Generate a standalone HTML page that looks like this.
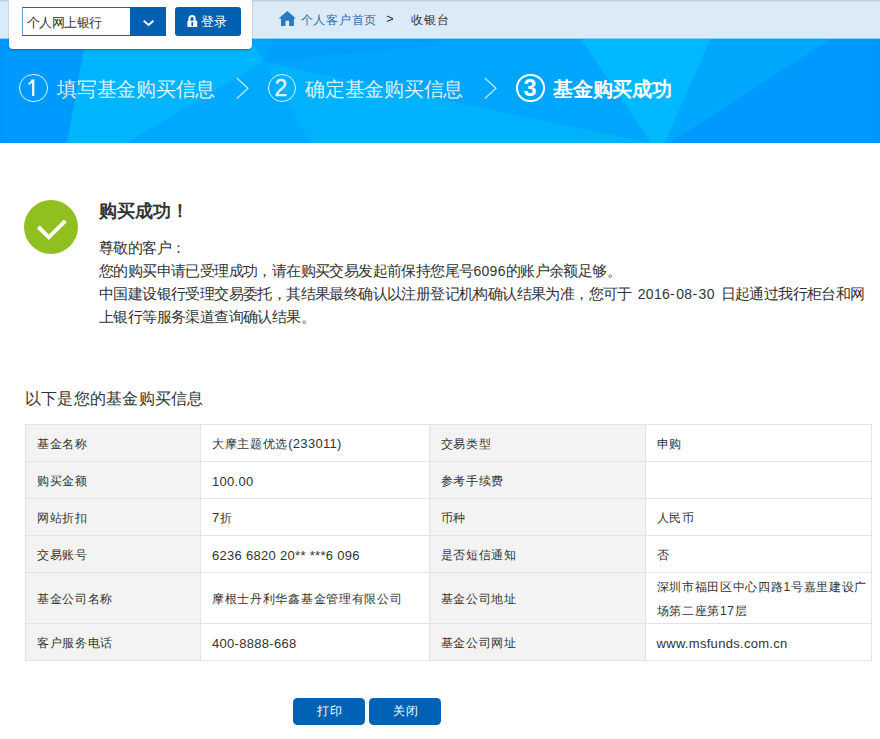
<!DOCTYPE html>
<html><head><meta charset="utf-8">
<style>
*{margin:0;padding:0;box-sizing:border-box}
html,body{width:880px;height:739px;overflow:hidden;background:#fff;font-family:"Liberation Sans",sans-serif;color:#333}
.abs{position:absolute}
#topbar{position:absolute;left:0;top:0;width:880px;height:38px;background:linear-gradient(#c3d1dd 0,#c3d1dd 1px,#d3e1ec 1px,#d3e1ec 2px,#dbeaf7 2px);border-bottom:1px solid #e5edf6}
#popup{position:absolute;z-index:5;left:9px;top:0;width:243px;height:48.5px;background:#fff;border-radius:0 0 4px 4px;box-shadow:0 1px 2px rgba(0,0,0,.3)}
#sel{position:absolute;left:12.5px;top:7px;width:144.5px;height:29px;border:1px solid #1863b0;border-left-color:#6b9bd2;background:#fff}
#sel span{position:absolute;left:4px;top:7px;font-size:13px;letter-spacing:-0.5px;color:#333;line-height:16px}
#dd{position:absolute;left:121px;top:7px;width:36px;height:29px;background:#0061b2}
#login{position:absolute;left:166px;top:7px;width:65.5px;height:29px;background:#0061b2;border-radius:3px;color:#fff;font-size:14px}
#crumb{position:absolute;top:11px;left:278px;font-size:13px;line-height:16px;white-space:nowrap}
#banner{position:absolute;left:0;top:38px;width:880px;height:105px;background:#05a8f6;overflow:hidden}
.step{position:absolute;top:75px;height:28px;color:rgba(255,255,255,.85);font-size:20px;letter-spacing:-0.25px;line-height:28px;white-space:nowrap}
.circ{position:absolute;top:73.8px;width:28.6px;height:28.6px;border:1.5px solid rgba(255,255,255,.85);border-radius:50%;color:rgba(255,255,255,.9);font-size:23px;line-height:27.4px;text-align:center}
#ok{position:absolute;left:24px;top:200px;width:54px;height:54px;border-radius:50%;background:#90c020}
#title{position:absolute;left:99px;top:200px;font-size:18px;font-weight:bold;line-height:22px;color:#333}
#msg{position:absolute;left:99px;top:236px;width:780px;font-size:15px;letter-spacing:-0.6px;line-height:23px;color:#333;white-space:nowrap}
.cm{letter-spacing:-0.6px}
.hy{letter-spacing:1.5px}
.sp{letter-spacing:1.7px}
#msg>div{height:23px}
.dg{font-size:14px;letter-spacing:0.3px}
#h2{position:absolute;left:25px;top:388px;font-size:16px;letter-spacing:0.23px;line-height:22px;color:#333}
table{position:absolute;left:25px;top:424px;width:846px;table-layout:fixed;border-collapse:collapse;font-size:13px;color:#333}
td{border:1px solid #e3e3e3;height:37px;padding:2px 11px 0 11px;vertical-align:middle;font-size:12px;letter-spacing:0.7px}
.n{font-size:13px;letter-spacing:0.3px}
td.l{background:#f3f3f3}
.btn{position:absolute;top:697.5px;width:72px;height:27px;background:#0062b4;border-radius:4.5px;color:#fff;font-size:12px;letter-spacing:1px;padding-left:1px;line-height:27px;text-align:center}
</style></head><body>
<div id="topbar"></div>
<div id="crumb"><svg width="19" height="16" viewBox="0 0 19 16" style="position:absolute;left:0;top:0"><path d="M9.3 0 L17.9 7.6 L15.9 7.6 L15.9 15 L11.1 15 L11.1 9.8 L7.5 9.8 L7.5 15 L3 15 L3 7.6 L0.6 7.6 Z" fill="#2a78c0"/></svg><span style="position:absolute;left:22.5px;top:0.5px;font-size:12px;letter-spacing:0.8px;color:#2a6cb3">个人客户首页</span><span style="position:absolute;left:108px">&gt;</span><span style="position:absolute;left:133px;top:0.5px;font-size:12px;letter-spacing:0.75px">收银台</span></div>
<div id="popup">
 <div id="sel"><span>个人网上银行</span></div>
 <div id="dd"><svg width="36" height="29" viewBox="0 0 36 29"><path d="M13.7 13.8 L18.6 17.9 L23.4 13.8" stroke="#fff" stroke-width="1.9" fill="none"/></svg></div>
 <div id="login"><svg width="11" height="13" viewBox="0 0 11 13" style="position:absolute;left:11.5px;top:7px"><path d="M2.5 7 V4.55 A2.55 2.55 0 0 1 7.6 4.55 V7" stroke="#fff" stroke-width="2.2" fill="none"/><rect x="0.4" y="6.8" width="9.8" height="6.1" fill="#fff"/><path d="M4.3 8.2 H6.3 L6 11.9 H4.6 Z" fill="#0061b2"/></svg><span style="position:absolute;left:25.5px;top:7px;line-height:16px;font-size:13px">登录</span></div>
</div>
<div id="banner">
<svg width="880" height="105" viewBox="0 38 880 105" style="position:absolute;left:0;top:0">
 <rect x="0" y="38" width="880" height="105" fill="#00a8fe"/>
 <polygon points="0,38 86,38 67,143 0,143" fill="#009afe"/>
 <rect x="0" y="38" width="7" height="105" fill="#0097fb"/>
 <polygon points="86,38 274,38 264,62 127,143 67,143" fill="#00b4fe"/>
 <polygon points="127,143 264,62 310,143" fill="#00a9fe"/>
 <polygon points="250,38 274,38 264,62" fill="#00a5fd"/>
 <polygon points="264,62 651,143 310,143" fill="#00b1fe"/>
 <polygon points="274,38 580,38 651,143 264,62" fill="#00a6fd"/>
 <polygon points="274,38 440,38 440,45 264,62" fill="#009ffc"/>
 <polygon points="580,38 711,38 665,143 651,143" fill="#00b8ff"/>
 <polygon points="711,38 832,38 669,143 665,143" fill="#00a8fd"/>
 <polygon points="832,38 880,38 880,143 669,143" fill="#009afe"/>
 <rect x="872" y="38" width="8" height="105" fill="#0096fb"/>
 <rect x="0" y="38" width="880" height="1" fill="#80ccf8"/>
</svg>
</div>
<div class="circ" style="left:19px"><svg width="26" height="26" viewBox="0 0 26 26" style="position:absolute;left:-0.5px;top:-0.5px"><path d="M13.2 5.6 V22" stroke="rgba(255,255,255,.9)" stroke-width="2.4" fill="none"/><path d="M8.6 10.2 Q11.8 8.6 12.6 5.6" stroke="rgba(255,255,255,.9)" stroke-width="2" fill="none"/></svg></div>
<div class="step" style="left:57px">填写基金购买信息</div>
<svg class="abs" style="left:236px;top:77px" width="14" height="23" viewBox="0 0 14 23"><path d="M0.8 0.9 L12 11.2 L0.8 21.5" stroke="rgba(255,255,255,.72)" stroke-width="1.3" fill="none"/></svg>
<div class="circ" style="left:267.5px;text-indent:-2px;-webkit-text-stroke:0.4px rgba(255,255,255,.8)">2</div>
<div class="step" style="left:305px">确定基金购买信息</div>
<svg class="abs" style="left:484px;top:77px" width="14" height="23" viewBox="0 0 14 23"><path d="M0.8 0.9 L12 11.2 L0.8 21.5" stroke="rgba(255,255,255,.72)" stroke-width="1.3" fill="none"/></svg>
<div class="circ" style="left:516px;border-width:2px;border-color:#fff;color:#fff;font-weight:bold;font-size:23.5px;line-height:24.6px;text-indent:-0.5px">3</div>
<div class="step" style="left:553px;color:#fff;font-weight:bold">基金购买成功</div>

<div id="ok"><svg width="54" height="54" viewBox="0 0 54 54"><path d="M14.4 27 L24.8 37.3 L41.3 20.8" stroke="#fff" stroke-width="4" fill="none"/></svg></div>
<div id="title">购买成功！</div>
<div id="msg"><div id="m1">尊敬的客户：</div><div id="m2">您的购买申请已受理成功<span class="cm">，</span>请在购买交易发起前保持您尾号<span class="dg">6096</span>的账户余额足够。</div><div id="m3">中国建设银行受理交易委托<span class="cm">，</span>其结果最终确认以注册登记机构确认结果为准<span class="cm">，</span>您可于<span class="sp"> </span><span class="dg">2016<span class="hy">-</span>08<span class="hy">-</span>30</span><span class="sp"> </span>日起通过我行柜台和网</div><div id="m4">上银行等服务渠道查询确认结果。</div></div>
<div id="h2">以下是您的基金购买信息</div>
<table>
<tr><td class="l" style="width:175px">基金名称</td><td style="width:228.5px">大摩主题优选<span class="n">(233011)</span></td><td class="l" style="width:216px">交易类型</td><td style="width:226px">申购</td></tr>
<tr><td class="l">购买金额</td><td><span class="n">100.00</span></td><td class="l">参考手续费</td><td></td></tr>
<tr><td class="l">网站折扣</td><td><span class="n">7</span>折</td><td class="l">币种</td><td>人民币</td></tr>
<tr><td class="l">交易账号</td><td><span class="n">6236 6820 20** ***6 096</span></td><td class="l">是否短信通知</td><td>否</td></tr>
<tr><td class="l" style="height:51px">基金公司名称</td><td>摩根士丹利华鑫基金管理有限公司</td><td class="l">基金公司地址</td><td style="line-height:24px;white-space:nowrap">深圳市福田区中心四路1号嘉里建设广<br>场第二座第17层</td></tr>
<tr><td class="l">客户服务电话</td><td><span class="n">400-8888-668</span></td><td class="l">基金公司网址</td><td><span class="n">www.msfunds.com.cn</span></td></tr>
</table>
<div class="btn" style="left:293px">打印</div>
<div class="btn" style="left:369px">关闭</div>
</body></html>
